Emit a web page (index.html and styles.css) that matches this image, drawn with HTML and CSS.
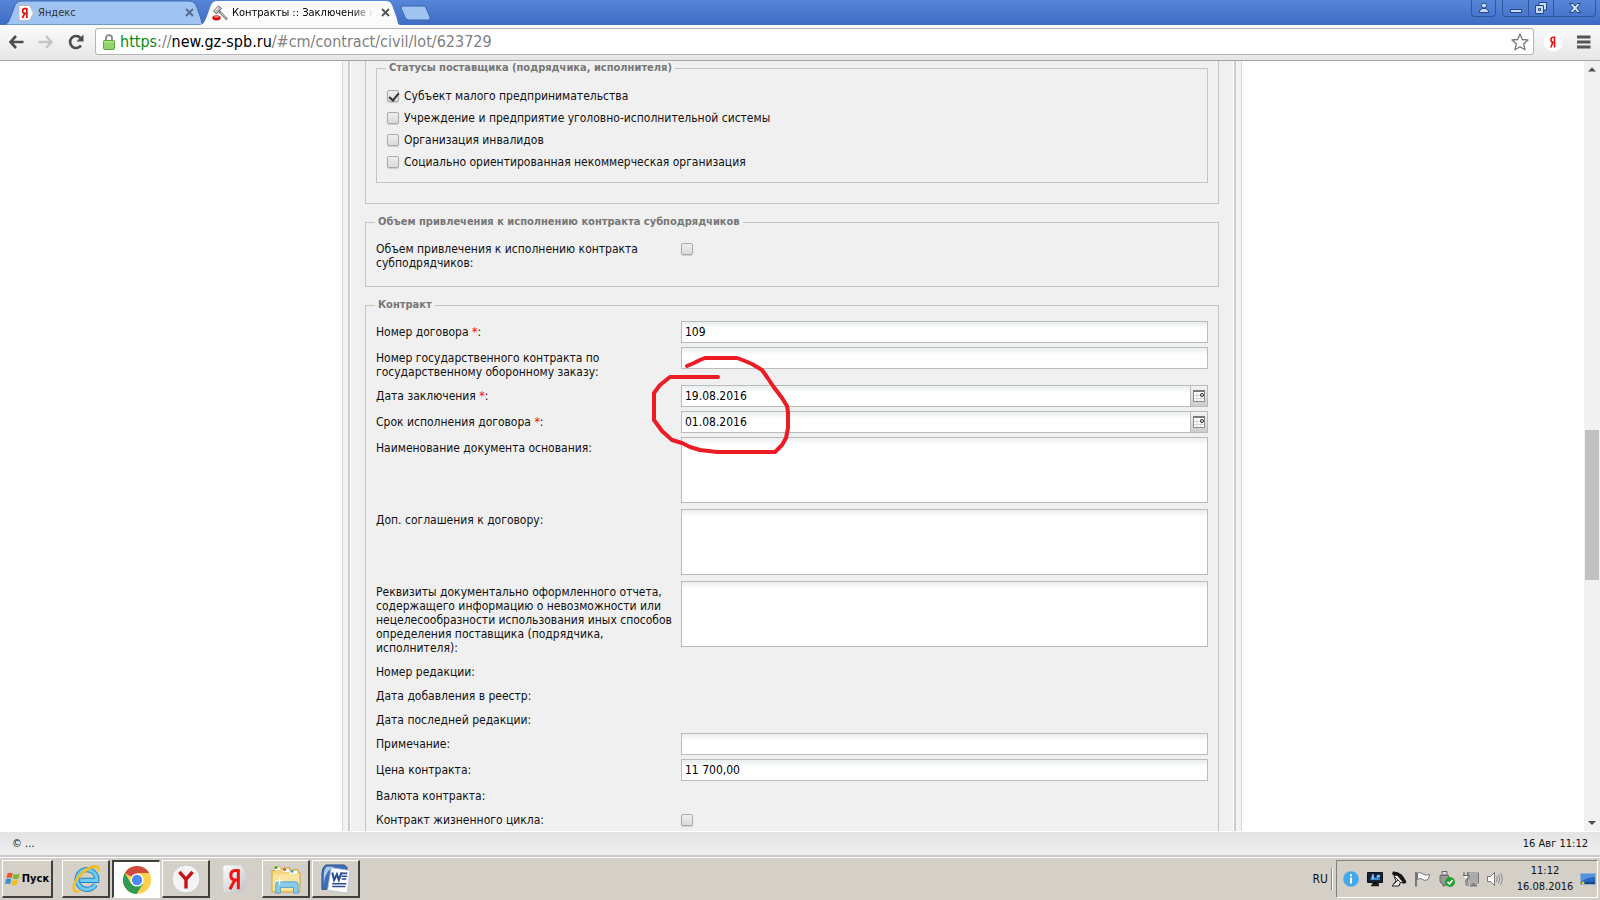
FILE: index.html
```html
<!DOCTYPE html>
<html lang="ru">
<head>
  <meta charset="UTF-8">
  <meta name="viewport" content="width=device-width, initial-scale=1.0">
  <title>Контракты :: Заключение контракта</title>
  <link rel="stylesheet" href="styles.css">
</head>
<body>
  <!-- Browser tabs -->
  <header class="tab-strip">
    <div class="tab">
      <svg class="tab-shape" viewBox="0 0 200 25" preserveAspectRatio="none"><path d="M0 25 C4 24 5 21 7 16 L11 5 Q13 1 17 1 H186 Q190 1 192 5 L196 16 C198 21 197 24 200 25Z" fill="#9fc4f3" stroke="#3f69ad"/></svg>
      <svg class="favicon" viewBox="0 0 16 16"><path d="M1 .5H11.500L15.500 8L11.500 15.500H1Z" fill="#fff" stroke="#bbb"/><path d="M8.800 3V13M8.800 3.700H7Q4.600 3.700 4.600 6Q4.600 8.300 7 8.300H8.800M6.800 8.500L4.300 13" fill="none" stroke="#e01010" stroke-width="1.700"/></svg>
      <span class="tab-title">Яндекс</span>
      <button class="tab-close" aria-label="Закрыть"><svg viewBox="0 0 9 9"><path d="M1 1L8 8M8 1L1 8" stroke="#54698a" stroke-width="1.800"/></svg></button>
    </div>
    <div class="tab tab-active">
      <svg class="tab-shape" viewBox="0 0 200 25" preserveAspectRatio="none"><path d="M0 25 C4 24 5 21 7 16 L11 5 Q13 1 17 1 H186 Q190 1 192 5 L196 16 C198 21 197 24 200 25Z" fill="#fbfbfb"/></svg>
      <svg class="favicon" viewBox="0 0 16 16"><path d="M7 6L15 14.500" stroke="#777" stroke-width="2.400"/><path d="M8 7L14.500 13.800" stroke="#ccc"/><path d="M1.500 6L6.500 1L9.500 3.500L4.500 9Z" fill="#bbb" stroke="#666"/><path d="M3 5.500L6.500 2.300" stroke="#fff"/><ellipse cx="4.500" cy="12.800" rx="4.200" ry="2.600" fill="#d51212"/><ellipse cx="4.500" cy="11.700" rx="2.500" ry="1" fill="#f77"/></svg>
      <span class="tab-title">Контракты :: Заключение к</span>
      <button class="tab-close" aria-label="Закрыть"><svg viewBox="0 0 9 9"><path d="M1 1L8 8M8 1L1 8" stroke="#555" stroke-width="1.800"/></svg></button>
    </div>
    <button class="new-tab" aria-label="Новая вкладка"><svg viewBox="0 0 32 16"><path d="M3 1H23Q25 1 26 3L30 12Q31 15 28 15H9Q6 15 5 12L1 3Q1 1 3 1Z" fill="#9fc4f3" stroke="#3d68af"/></svg></button>
    <div class="window-buttons">
      <button class="profile" aria-label="Пользователь"><svg viewBox="0 0 12 12"><circle cx="6" cy="3.500" r="2.500"/><path d="M1.500 10.500V9L4 6.500H8L10.500 9V10.500Z"/></svg></button>
      <div class="window-group">
        <button aria-label="Свернуть"><svg viewBox="0 0 12 12"><path d="M.5 7.500H11.500V10.500H.5Z"/></svg></button>
        <button aria-label="Развернуть"><svg viewBox="0 0 12 12"><path d="M4 .5H11.500V8H4Z"/><path d="M.5 3.500H8.500V11.500H.5Z"/><path d="M3.500 6.500H5.500V8.500H3.500Z"/></svg></button>
        <button class="close" aria-label="Закрыть окно"><svg viewBox="0 0 12 12"><path d="M.5 1.500H4L6 4L8 1.500H11.500L8 6L11.500 10.500H8L6 8L4 10.500H.5L4 6Z"/></svg></button>
      </div>
    </div>
  </header>

  <!-- Address bar -->
  <nav class="toolbar">
    <button aria-label="Назад"><svg viewBox="0 0 16 16"><path d="M8 2L2.500 8L8 14M2.500 8H15.500" fill="none" stroke="#4d4d4d" stroke-width="2.600"/></svg></button>
    <button aria-label="Вперед"><svg viewBox="0 0 16 16"><path d="M8 2L13.500 8L8 14M13.500 8H.5" fill="none" stroke="#c4c4c4" stroke-width="2.400"/></svg></button>
    <button aria-label="Обновить"><svg viewBox="0 0 16 16"><path d="M13 11.500A6 6 0 1 1 12.500 4" fill="none" stroke="#4d4d4d" stroke-width="2.600"/><path d="M15.500 .5V7.500H8.500Z" fill="#4d4d4d"/></svg></button>
    <div class="address">
      <svg class="lock" viewBox="0 0 12 16"><path d="M3 8V4Q3 1.200 6 1.200Q9 1.200 9 4V8" fill="none" stroke="#888" stroke-width="1.800"/><rect x=".5" y="6.500" width="11" height="9" rx="1" fill="#94d26a" stroke="#5da53b"/><path d="M1.500 8H10.500" stroke="#c7edaa"/></svg>
      <a class="url" href="#cm/contract/civil/lot/623729"><span class="scheme">https</span>://<span class="host">new.gz-spb.ru</span>/#cm/contract/civil/lot/623729</a>
      <svg class="star" viewBox="0 0 18 18"><path d="M9 1L11.300 6.500L17 7L12.700 10.800L14 16.800L9 13.700L4 16.800L5.300 10.800L1 7L6.700 6.500Z" fill="#fff" stroke="#777" stroke-width="1.300" stroke-linejoin="round"/></svg>
    </div>
    <button class="extension" aria-label="Яндекс"><svg viewBox="0 0 20 20"><circle cx="10" cy="10" r="9.500" fill="#fff"/><path d="M11.500 4.500V15.500M11.500 5.200H10.300Q8 5.200 8 7.700Q8 10.300 10.300 10.300H11.500M9.800 10.500L7.800 15.500" fill="none" stroke="#f01010" stroke-width="1.600"/></svg></button>
    <button class="menu" aria-label="Меню"><svg viewBox="0 0 14 14"><path d="M0 2H13.500M0 7H13.500M0 12H13.500" stroke="#555" stroke-width="2.800"/></svg></button>
  </nav>

  <main class="viewport">
    <div class="page">
      <form class="sheet">
        <div class="section section-first">
          <fieldset class="statuses">
            <legend>Статусы поставщика (подрядчика, исполнителя)</legend>
            <label class="check-row"><input type="checkbox" checked>Субъект малого предпринимательства</label>
            <label class="check-row"><input type="checkbox">Учреждение и предприятие уголовно-исполнительной системы</label>
            <label class="check-row"><input type="checkbox">Организация инвалидов</label>
            <label class="check-row"><input type="checkbox">Социально ориентированная некоммерческая организация</label>
          </fieldset>
        </div>

        <fieldset class="section">
          <legend>Объем привлечения к исполнению контракта субподрядчиков</legend>
          <div class="row"><label for="volume">Объем привлечения к исполнению контракта субподрядчиков:</label><input type="checkbox" id="volume"></div>
        </fieldset>

        <fieldset class="section contract">
          <legend>Контракт</legend>
          <div class="row"><label for="number">Номер договора <b>*</b>:</label><input type="text" id="number" value="109"></div>
          <div class="row"><label for="gov-number">Номер государственного контракта по государственному оборонному заказу:</label><input type="text" id="gov-number"></div>
          <div class="row">
            <label for="date-signed">Дата заключения <b>*</b>:</label>
            <div class="date-field"><input type="text" id="date-signed" value="19.08.2016"><button type="button" aria-label="Календарь"><svg viewBox="0 0 12 12"><path d="M.5 1H11.500V11.500H.5Z" fill="#fff" stroke="#8a8a8a"/><path d="M0 1H12" stroke="#777" stroke-width="2"/><path d="M4 3V11M8 3V11M1 5.500H11M1 8.500H11" stroke="#d5d5d5"/><circle cx="9" cy="5" r="1.500" fill="#fff" stroke="#222"/></svg></button></div>
          </div>
          <div class="row">
            <label for="date-due">Срок исполнения договора <b>*</b>:</label>
            <div class="date-field"><input type="text" id="date-due" value="01.08.2016"><button type="button" aria-label="Календарь"><svg viewBox="0 0 12 12"><path d="M.5 1H11.500V11.500H.5Z" fill="#fff" stroke="#8a8a8a"/><path d="M0 1H12" stroke="#777" stroke-width="2"/><path d="M4 3V11M8 3V11M1 5.500H11M1 8.500H11" stroke="#d5d5d5"/><circle cx="9" cy="5" r="1.500" fill="#fff" stroke="#222"/></svg></button></div>
          </div>
          <div class="row"><label for="basis">Наименование документа основания:</label><textarea id="basis"></textarea></div>
          <div class="row"><label for="addendum">Доп. соглашения к договору:</label><textarea id="addendum"></textarea></div>
          <div class="row"><label for="report">Реквизиты документально оформленного отчета, содержащего информацию о невозможности или нецелесообразности использования иных способов определения поставщика (подрядчика, исполнителя):</label><textarea id="report"></textarea></div>
          <div class="row"><span class="caption">Номер редакции:</span></div>
          <div class="row"><span class="caption">Дата добавления в реестр:</span></div>
          <div class="row"><span class="caption">Дата последней редакции:</span></div>
          <div class="row"><label for="note">Примечание:</label><input type="text" id="note"></div>
          <div class="row"><label for="price">Цена контракта:</label><input type="text" id="price" value="11 700,00"></div>
          <div class="row"><span class="caption">Валюта контракта:</span></div>
          <div class="row"><label for="lifecycle">Контракт жизненного цикла:</label><input type="checkbox" id="lifecycle"></div>
          <svg class="ink" viewBox="0 0 144 104"><path d="M37 14L44 11L50 8L55 6H87L95 9L102 12L112 18L117 25L123 34L132 46L137 54L138 60V76L136 86L132 93L125 100H67L50 98L40 95L32 91L22 88L12 79L4 68V41L10 33L20 25H68"/></svg>
        </fieldset>
      </form>
    </div>
    <div class="scrollbar">
      <svg viewBox="0 0 16 16"><path d="M4 10.500H12L8 6.500Z" fill="#4f4f4f"/></svg>
      <div class="track-top"></div>
      <div class="thumb"></div>
      <div class="track-bottom"></div>
      <svg viewBox="0 0 16 16"><path d="M4 6H12L8 10Z" fill="#4f4f4f"/></svg>
    </div>
  </main>

  <footer class="status"><span>© ...</span><span>16 Авг 11:12</span></footer>

  <div class="taskbar">
    <button class="start"><svg viewBox="0 0 16 16"><path d="M2.500 2.500Q5 .8 7.800 2.500L6.600 7.300Q4 5.800 1.300 7.300Z" fill="#e8592a"/><path d="M8.800 3Q11.500 4.200 14.700 2.700L13.500 7.600Q10.500 9 7.600 7.700Z" fill="#7cb82f"/><path d="M1 8.300Q3.500 6.900 6.300 8.400L5.100 13.300Q2.500 11.800 0 13.300Z" fill="#3a8bd6"/><path d="M7.400 8.900Q10 10.200 13.200 8.700L12 13.600Q9.200 15 6.200 13.800Z" fill="#f5bb22"/></svg>Пуск</button>
    <button class="task" aria-label="Internet Explorer"><svg viewBox="0 0 32 32"><path d="M26 22A10.500 10.500 0 1 1 27.500 17.500H10" fill="none" stroke="#2280c4" stroke-width="5.500"/><path d="M26 22A10.500 10.500 0 1 1 27.500 17.500H10" fill="none" stroke="#6ccbf4" stroke-width="3.500"/><path d="M5 30.500C-4 28 6 9 19 3C29-2 33 3 29 10C30 4 26 3 20 6C9 11 1 25 5 27.500Q8 29 12 27Q9 31 5 30.500Z" fill="#f5bd20"/></svg></button>
    <button class="task pressed" aria-label="Google Chrome"><svg viewBox="0 0 32 32"><circle cx="16" cy="16" r="15" fill="#fdd04f"/><path d="M16 16L3 8.500A15 15 0 0 1 29 8.500H16Z" fill="#d04a40"/><path d="M3 8.500A15 15 0 0 0 15.500 31L22.500 19.800L9.500 19.800Z" fill="#2f9a52"/><circle cx="16" cy="16" r="7" fill="#fff"/><circle cx="16" cy="16" r="5.500" fill="#4c8bf5"/></svg></button>
    <button class="task" aria-label="Яндекс.Браузер"><svg viewBox="0 0 32 32"><circle cx="16" cy="16" r="15" fill="#f4f4f4" stroke="#c4c4c4"/><path d="M9 8.500L16 16.500L23 8.500M16 16V26" fill="none" stroke="#c91218" stroke-width="3.600"/></svg></button>
    <button class="task plain" aria-label="Яндекс"><svg viewBox="0 0 32 32"><defs><linearGradient id="tag" x2="1" y2="1"><stop stop-color="#fff"/><stop offset="1" stop-color="#bcbcbc"/></linearGradient></defs><path d="M4 1H22L31 16L22 31H4Q2 31 2 29V3Q2 1 4 1Z" fill="url(#tag)" stroke="#ccc"/><path d="M18.500 5.500V27M18.500 7H15.500Q10.500 7 10.500 12Q10.500 17 15.500 17H18.500M14.500 17.500L9.500 27" fill="none" stroke="#f21414" stroke-width="3.200"/></svg></button>
    <button class="task" aria-label="Проводник"><svg viewBox="0 0 32 32"><path d="M1 7H4V3H10V5H14V4H20V7H22V6H29V9H31V29Q31 30 30 30H2Q1 30 1 29Z" fill="#f1d77c" stroke="#c9a548"/><path d="M4 5H10M13 7H19M20 9H28" stroke="#fff" stroke-width="3"/><path d="M4 4H7" stroke="#1b9a2c" stroke-width="2"/><path d="M13 6H16" stroke="#c23a22" stroke-width="2"/><path d="M21 8H24" stroke="#258ad6" stroke-width="2"/><path d="M2 11H30V28H2Z" fill="#f8e6a0"/><path d="M5 31V22Q5 19 8 19H26Q29 19 29 22V31H24V25H10V31Z" fill="#8acbea" stroke="#5ba0c6"/><path d="M9 14V22M5 18H13" stroke="#fff"/></svg></button>
    <button class="task" aria-label="Microsoft Word"><svg viewBox="0 0 32 32"><path d="M5 1H25L28 4L24 27H1V10Q1 4 5 1Z" fill="#3e6eb5" stroke="#2b4e86"/><path d="M3 25Q3 8 14 3H6Q3 6 3 12Z" fill="#a9cbee"/><path d="M11 4L31 7L28 31L7 28Z" fill="#fff" stroke="#b8c5d8"/><path d="M12 9L14 17L17 11L19 17L22 9" fill="none" stroke="#2a4f91" stroke-width="2.200"/><path d="M22 10H28M22 13H28M22 16H27M12 21H27M12 24H26" stroke="#2a4f91" stroke-width="1.700"/></svg></button>
    <span class="language">RU</span>
    <div class="tray">
      <svg viewBox="0 0 16 16"><circle cx="8" cy="8" r="7.800" fill="#41a9ec"/><path d="M8 6.500V12.500M8 3.300V5.300" stroke="#fff" stroke-width="2"/></svg>
      <svg viewBox="0 0 16 16"><path d="M.5 1.500H15.500V11.500H.5Z" fill="#11243c" stroke="#111"/><path d="M3 9L5 4L8 7L12 3L13 9Z" fill="#3689d3"/><path d="M6 3V8M10 5H13" stroke="#fff"/><path d="M6 12V14H11V12M4 14.500H12" stroke="#222" stroke-width="1.500"/></svg>
      <svg viewBox="0 0 16 16"><path d="M2 .5Q11 0 15.500 11Q14 14 11 12L1 3Z" fill="#151515"/><path d="M3 5L6 4L12 11L9 12L8 15H1L5 10Z" fill="#eee" stroke="#222"/><path d="M4 6L10 12M3 13L7 9" stroke="#333"/></svg>
      <svg viewBox="0 0 16 16"><path d="M1 1V15.500" stroke="#777" stroke-width="2"/><path d="M2.500 2Q5 .5 8 3Q11 5 15 3.500L12.500 9Q9 10 7 8Q4.500 7 2.500 8.500Z" fill="#fff" stroke="#777"/></svg>
      <svg viewBox="0 0 16 16"><path d="M3 .5H8V4H3Z" fill="#ddd" stroke="#666"/><path d="M1 4.500H9.500V11Q9 13 6 13V15H4V13Q1 12 1 10Z" fill="#999" stroke="#666"/><circle cx="11" cy="11" r="5" fill="#25a12f"/><path d="M8.500 11L10.500 13L13.500 9" fill="none" stroke="#fff" stroke-width="1.700"/></svg>
      <svg viewBox="0 0 16 16"><path d="M5 2.500H15.500V11.500H5Z" fill="#aaa" stroke="#f5f5f5"/><path d="M4.500 2H15.500V12H4.500Z" fill="none" stroke="#777"/><path d="M7 14.500H14M10.500 12V14" stroke="#777" stroke-width="2"/><path d="M1 1V4M5 1V4M0 4.500H6V7Q5 9 3 9V14H6" fill="none" stroke="#666"/><path d="M1.500 5H4.500V7H1.500Z" fill="#fff"/></svg>
      <svg viewBox="0 0 16 16"><path d="M.5 5.500H3.500L7.500 1.500V14.500L3.500 10.500H.5Z" fill="#fff" stroke="#777"/><path d="M9.500 5Q11 8 9.500 11M11.500 3.500Q14 8 11.500 12.500M13.500 2Q17 8 13.500 14" fill="none" stroke="#8b8b8b"/></svg>
      <div class="clock"><span>11:12</span><span>16.08.2016</span></div>
      <svg class="desktop" viewBox="0 0 16 16"><path d="M.5 2.500H15.500V13.500H.5Z" fill="#2766b8" stroke="#8fb1da"/><path d="M1 3H15V6Q7 6 1 11Z" fill="#5593dc"/><path d="M1 12H15" stroke="#1b4481" stroke-width="2"/><circle cx="3" cy="12" r="1.500" fill="#f4c733"/></svg>
    </div>
  </div>
</body>
</html>
```
FILE: styles.css
```css
* {
  box-sizing: border-box;
}

body {
  display: flex;
  flex-direction: column;
  height: 100vh;
  margin: 0;
  overflow: hidden;
  background: #fff;
  color: #111;
  font-family: Tahoma, "DejaVu Sans Condensed", sans-serif;
  font-size: 12px;
  line-height: 14px;
}

button {
  padding: 0;
  border: 0;
  background: none;
  color: inherit;
  font: inherit;
}

svg {
  display: block;
  flex: none;
}

/* tabs */
.tab-strip {
  display: flex;
  flex: none;
  height: 25px;
  padding-left: 4px;
  background: linear-gradient(#5686d8, #3e6cc6);
}

.tab {
  position: relative;
  display: flex;
  align-items: center;
  width: 200px;
  padding: 0 8px 0 14px;
  color: #333;
}

.tab-active {
  margin-left: -4px;
  padding-left: 12px;
  color: #000;
}

.tab-shape {
  position: absolute;
  top: 0;
  left: 0;
  width: 100%;
  height: 25px;
}

.favicon {
  position: relative;
  width: 16px;
  height: 16px;
}

.tab-title {
  position: relative;
  flex: 1;
  margin: 0 8px 0 4px;
  overflow: hidden;
  white-space: nowrap;
  font-size: 11px;
}

.tab-active .tab-title {
  -webkit-mask-image: linear-gradient(to right, #000 85%, transparent);
  mask-image: linear-gradient(to right, #000 85%, transparent);
}

.tab-close {
  position: relative;
  width: 9px;
  margin-right: 2px;
}

.new-tab {
  width: 32px;
  height: 16px;
  margin-top: 5px;
}

.window-buttons {
  display: flex;
  gap: 6px;
  height: 17px;
  margin-left: auto;
  padding-right: 4px;
}

.window-buttons button {
  display: flex;
  align-items: center;
  justify-content: center;
  width: 25px;
}

.window-buttons svg {
  width: 12px;
  height: 12px;
  fill: #c9dcf8;
  stroke: #244580;
}

.window-buttons .profile,
.window-group {
  border: 1px solid #2f569f;
  border-top: 0;
  border-radius: 0 0 4px 4px;
}

.window-group {
  display: flex;
}

.window-group button + button {
  border-left: 1px solid #2f569f;
}

.window-group .close {
  width: 42px;
}

/* toolbar */
.toolbar {
  display: flex;
  flex: none;
  align-items: center;
  gap: 14px;
  height: 36px;
  padding: 0 9px 2px 8px;
  border-bottom: 1px solid #a5a5a5;
  background: linear-gradient(#fbfbfb, #e6e6e8);
}

.toolbar button svg {
  width: 16px;
  height: 16px;
}

.toolbar .extension svg {
  width: 20px;
  height: 20px;
}

.toolbar .menu svg {
  width: 14px;
  height: 14px;
}

.address {
  display: flex;
  flex: 1;
  align-items: center;
  height: 27px;
  margin: 0 -5px 0 -3px;
  padding: 0 4px 0 7px;
  border: 1px solid #b5b5b5;
  border-radius: 3px;
  background: #fff;
}

.lock {
  width: 12px;
  height: 16px;
}

.url {
  flex: 1;
  margin-left: 5px;
  color: #808080;
  font-size: 16px;
  line-height: 24px;
  text-decoration: none;
}

.scheme {
  color: #0b8a0b;
}

.host {
  color: #000;
}

.star {
  width: 18px;
  height: 18px;
}

/* page */
.viewport {
  display: flex;
  flex: 1;
  min-height: 0;
  overflow: hidden;
}

.page {
  flex: 1;
  overflow: hidden;
}

.sheet {
  max-width: 900px;
  margin: 0 auto;
  padding: 0 22px;
  border: solid #d6d6d6;
  border-width: 0 1px;
  background: #f0f0f0;
  box-shadow: inset 5px 0 #f3f3f3, inset 7px 0 #ccc, inset 8px 0 #fff, inset -5px 0 #f3f3f3, inset -7px 0 #ccc, inset -8px 0 #fff;
}

fieldset {
  min-width: 0;
  margin: 0;
  border: 1px solid #c4c4c4;
}

legend {
  margin-left: -1px;
  padding: 0 3px;
  color: #777;
  font-size: 11px;
  font-weight: bold;
}

.section {
  position: relative;
  margin-bottom: 11px;
  padding: 9px 10px 10px;
}

.section-first {
  padding: 0 10px 20px;
  border: 1px solid #c4c4c4;
  border-top: 0;
}

.statuses {
  padding: 10px 10px 9px;
}

.check-row {
  display: flex;
  align-items: center;
  gap: 5px;
  height: 22px;
}

input[type="checkbox"] {
  flex: none;
  width: 12px;
  height: 12px;
  margin: 0;
  border: 1px solid #aaa;
  border-radius: 2px;
  background: linear-gradient(#eee, #dadada);
  box-shadow: 0 1px 1px #ccc;
  appearance: none;
}

input[type="checkbox"]:checked::after {
  content: "";
  display: block;
  width: 4px;
  height: 8px;
  margin-left: 3px;
  border: solid #333;
  border-width: 0 2px 2px 0;
  transform: rotate(40deg);
}

.row {
  display: flex;
  align-items: flex-start;
  margin-bottom: 4px;
}

.row label,
.row .caption {
  flex: none;
  width: 305px;
  padding: 4px 5px 2px 0;
}

.row b {
  color: #f00;
  font-weight: normal;
}

.row input[type="checkbox"] {
  margin-top: 5px;
}

.row input[type="text"],
textarea {
  flex: 1;
  min-width: 0;
  height: 22px;
  margin: 0;
  padding: 1px 3px;
  border: 1px solid #bbb;
  border-radius: 0;
  background: linear-gradient(#e9eeef, #fff 7px);
  color: #000;
  font: inherit;
}

.row textarea {
  height: 66px;
  margin-bottom: 2px;
  resize: none;
}

.date-field {
  display: flex;
  flex: 1;
}

.date-field button {
  display: flex;
  align-items: center;
  justify-content: center;
  width: 17px;
  border: 1px solid #b5b8c8;
  border-left: 0;
  background: linear-gradient(#f3f3f3, #ccc);
}

.date-field svg {
  width: 12px;
  height: 12px;
}

/* hand-drawn mark around the dates */
.ink {
  position: absolute;
  top: 40px;
  left: 284px;
  width: 144px;
  height: 104px;
  fill: none;
  stroke: #ed1c24;
  stroke-width: 4;
  stroke-linecap: round;
  stroke-linejoin: round;
  pointer-events: none;
}

.scrollbar {
  display: flex;
  flex-direction: column;
  width: 16px;
  background: #f1f1f1;
}

.track-top {
  flex: 3;
}

.thumb {
  height: 150px;
  margin: 0 1px;
  background: #c1c1c1;
}

.track-bottom {
  flex: 2;
}

.status {
  display: flex;
  flex: none;
  align-items: center;
  justify-content: space-between;
  height: 26px;
  padding: 0 12px;
  border-top: 1px solid #fff;
  border-bottom: 2px solid #cbc9c9;
  background: linear-gradient(#e4e4e4, #eee);
  font-size: 11px;
}

/* taskbar */
.taskbar {
  display: flex;
  flex: none;
  align-items: center;
  gap: 2px;
  height: 43px;
  padding: 0 2px;
  border-top: 1px solid #fff;
  background: #d4d0c8;
}

.start,
.task {
  display: flex;
  align-items: center;
  justify-content: center;
  width: 48px;
  height: 38px;
  border: solid;
  border-width: 1px 2px 2px 1px;
  border-color: #fff #404040 #404040 #fff;
}

.start {
  gap: 1px;
  width: 51px;
  margin-right: 7px;
  color: #000;
  font-size: 11px;
  font-weight: bold;
}

.start svg {
  width: 16px;
  height: 16px;
}

.task svg {
  width: 30px;
  height: 30px;
}

.task.pressed {
  border-width: 2px 1px 1px 2px;
  border-color: #404040 #fff #fff #404040;
  background: #fff;
}

.task.plain {
  border-color: transparent;
}

.language {
  margin-left: auto;
  padding: 4px 3px 4px 0;
  border-right: 1px solid #888;
  box-shadow: 1px 0 #fff;
}

.tray {
  display: flex;
  align-items: center;
  gap: 8px;
  height: 38px;
  margin-left: 2px;
  padding: 0 1px 0 6px;
  border: 1px solid;
  border-color: #808080 #fff #fff #808080;
}

.tray svg {
  width: 16px;
  height: 16px;
}

.clock {
  display: flex;
  flex-direction: column;
  gap: 2px;
  width: 60px;
  margin: 0 -3px 0 4px;
  text-align: center;
  font-size: 11px;
}
```
